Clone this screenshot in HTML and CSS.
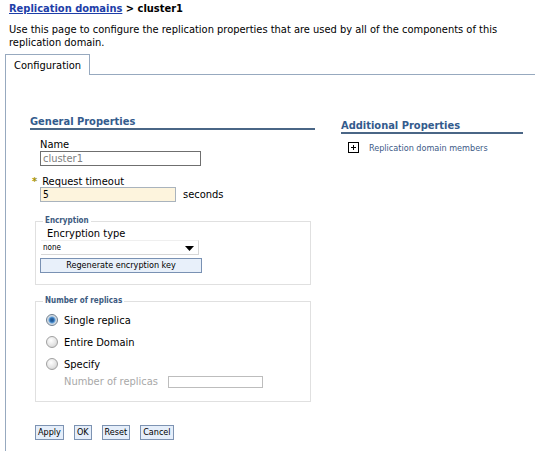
FILE: index.html
```html
<!DOCTYPE html>
<html>
<head>
<meta charset="utf-8">
<title>cluster1</title>
<link rel="stylesheet" href="styles.css">
</head>
<body>
<div class="crumb"><a href="#" class="crumb-link">Replication domains</a> &gt; cluster1</div>
<p class="desc">Use this page to configure the replication properties that are used by all of the components of this replication domain.</p>
<div class="tabs">
  <div class="tab">Configuration</div>
  <div class="tab-fill"></div>
</div>
<div class="panel">
  <div class="columns">
    <div class="col-main">
      <h2 class="section-title">General Properties</h2>
      <div class="field">
        <label class="label">Name</label>
        <div class="input input-name">cluster1</div>
      </div>
      <div class="field field-timeout">
        <label class="label"><span class="req">*</span>Request timeout</label>
        <div class="row">
          <div class="input input-timeout">5</div>
          <span class="unit">seconds</span>
        </div>
      </div>
      <fieldset class="group group-enc">
        <legend class="legend">Encryption</legend>
        <div class="big-label">Encryption type</div>
        <div class="select">
          <span>none</span>
          <svg class="arrow" width="9" height="5" viewBox="0 0 9 5"><path d="M0 0H9L4.5 5Z" fill="#000"/></svg>
        </div>
        <button class="wide-btn" type="button">Regenerate encryption key</button>
      </fieldset>
      <fieldset class="group group-rep">
        <legend class="legend">Number of replicas</legend>
        <div class="radio-row"><span class="radio checked"></span><span class="radio-label">Single replica</span></div>
        <div class="radio-row"><span class="radio"></span><span class="radio-label">Entire Domain</span></div>
        <div class="radio-row"><span class="radio"></span><span class="radio-label">Specify</span></div>
        <div class="sub-row">
          <span class="sub-label">Number of replicas</span>
          <div class="input input-sub"></div>
        </div>
      </fieldset>
      <div class="buttons">
        <button class="btn" type="button">Apply</button>
        <button class="btn" type="button">OK</button>
        <button class="btn" type="button">Reset</button>
        <button class="btn" type="button">Cancel</button>
      </div>
    </div>
    <div class="col-side">
      <h2 class="section-title">Additional Properties</h2>
      <div class="side-item">
        <svg class="plus" width="11" height="11" viewBox="0 0 11 11"><rect x="0.5" y="0.5" width="10" height="10" fill="#fff" stroke="#000"/><path d="M3 5.5H8M5.5 3V8" stroke="#000" stroke-width="1"/></svg>
        <a href="#" class="side-link">Replication domain members</a>
      </div>
    </div>
  </div>
</div>
</body>
</html>
```
FILE: styles.css
```css
html, body {
  margin: 0;
  padding: 0;
  background: #fff;
}
body {
  font-family: "DejaVu Sans Condensed", "DejaVu Sans", sans-serif;
  font-size: 11px;
  color: #000;
  width: 535px;
  height: 451px;
  overflow: hidden;
}
.crumb {
  padding: 2px 9px 0;
  font-weight: bold;
  line-height: 13px;
}
.crumb-link {
  color: #1d3ea8;
  text-decoration: underline;
}
.desc {
  margin: 8px 9px 0;
  line-height: 13px;
  width: 510px;
}
.tabs {
  display: flex;
  margin-top: 5px;
  margin-left: 5px;
  height: 21px;
}
.tab {
  width: 75px;
  border: 1px solid #97a9bf;
  border-bottom: none;
  padding: 4px 0 0 8px;
  line-height: 13px;
}
.tab-fill {
  flex: 1;
  border-bottom: 1px solid #97a9bf;
}
.panel {
  margin-left: 5px;
  border-left: 1px solid #97a9bf;
  height: 378px;
  padding: 41px 0 0 24px;
  box-sizing: border-box;
}
.columns {
  display: flex;
}
.col-main {
  width: 285px;
}
.col-side {
  margin-left: 26px;
  width: 182px;
  padding-top: 4px;
}
.section-title {
  margin: 0;
  font-size: 11px;
  font-weight: bold;
  color: #335b8d;
  line-height: 12px;
  border-bottom: 2px solid #4a6686;
  padding-bottom: 0;
}
.field {
  margin-left: 10px;
  margin-top: 9px;
}
.field-timeout {
  margin-left: 2px;
  margin-top: 10px;
}
.label {
  display: block;
  line-height: 11px;
  margin-bottom: 1px;
}
.field-timeout .label {
  margin-bottom: 0;
}
.req {
  color: #a59300;
  font-weight: bold;
  margin-right: 5px;
}
.input {
  border: 1px solid #7a7a7a;
  height: 13px;
  box-sizing: content-box;
  background: #fff;
  line-height: 13px;
  padding: 0 2px;
  font-size: 10px;
}
.input-name {
  width: 155px;
  color: #808080;
  font-size: 11px;
  border-color: #6f6f6f;
}
.row {
  display: flex;
  align-items: center;
  margin-left: 8px;
}
.input-timeout {
  width: 130px;
  background: #fdf4dd;
  border-color: #a9b3bd;
  color: #000;
  font-size: 10px;
}
.unit {
  margin-left: 7px;
}
.group {
  margin: 14px 0 0 5px;
  width: 276px;
  box-sizing: border-box;
  border: 1px solid #e0e0e0;
  padding: 0 5px 0 5px;
}
.group-enc {
  height: 69px;
}
.group-rep {
  margin-top: 11px;
  height: 106px;
}
.legend {
  font-size: 8px;
  font-weight: bold;
  color: #3c5a80;
  padding: 0 2px;
  margin-left: 2px;
  line-height: 10px;
}
.big-label {
  font-size: 11px;
  margin-left: 6px;
  line-height: 13px;
  margin-top: 1px;
}
.select {
  display: flex;
  align-items: center;
  justify-content: space-between;
  width: 158px;
  height: 15px;
  border-top: 1px solid #efefef;
  border-bottom: 1px solid #d7d7d7;
  border-right: 1px solid #d7d7d7;
  box-sizing: border-box;
  font-size: 8px;
  padding: 0 4px 0 2px;
  margin-top: 0;
}
.arrow {
  margin-top: 2px;
}
.wide-btn {
  display: block;
  margin-top: 3px;
  margin-left: -1px;
  width: 162px;
  height: 15px;
  padding: 0;
  border: 1px solid #7991b3;
  background: #e8f0fa;
  font-family: "DejaVu Sans Condensed", "DejaVu Sans", sans-serif;
  font-size: 9px;
  color: #000;
  line-height: 13px;
}
.radio-row {
  display: flex;
  align-items: center;
  height: 22px;
  margin-left: 5px;
}
.radio-row:first-of-type {
  margin-top: 3px;
}
.radio {
  width: 12px;
  height: 12px;
  border-radius: 50%;
  box-sizing: border-box;
  border: 1px solid #a0a0a0;
  background: radial-gradient(circle at 40% 35%, #ffffff 0%, #e2e2e2 60%, #c4c4c4 100%);
  margin-right: 6px;
  flex: none;
}
.radio.checked {
  border-color: #6f7f90;
  background: radial-gradient(circle at 50% 50%, #1f4f86 0, #2d6db0 2px, #6aa6dc 3px, #d0d8e0 4px, #eef2f5 100%);
}
.radio-label {
  font-size: 11px;
  line-height: 13px;
}
.sub-row {
  display: flex;
  align-items: center;
  margin-left: 23px;
  margin-top: 0;
}
.sub-label {
  color: #a8a8a8;
  font-size: 11px;
  width: 104px;
}
.input-sub {
  width: 89px;
  height: 10px;
  border-color: #bdbdbd;
}
.buttons {
  display: flex;
  gap: 10px;
  margin-top: 23px;
  margin-left: 5px;
}
.btn {
  height: 15px;
  padding: 0 2px;
  border: 1px solid #7d93b2;
  background: #e5eefa;
  font-family: "DejaVu Sans Condensed", "DejaVu Sans", sans-serif;
  font-size: 9px;
  line-height: 13px;
  color: #000;
}
.side-item {
  display: flex;
  align-items: center;
  margin-top: 8px;
  margin-left: 7px;
}
.plus {
  margin-right: 10px;
  flex: none;
}
.side-link {
  color: #3d5a87;
  font-size: 9px;
  text-decoration: none;
}
```
